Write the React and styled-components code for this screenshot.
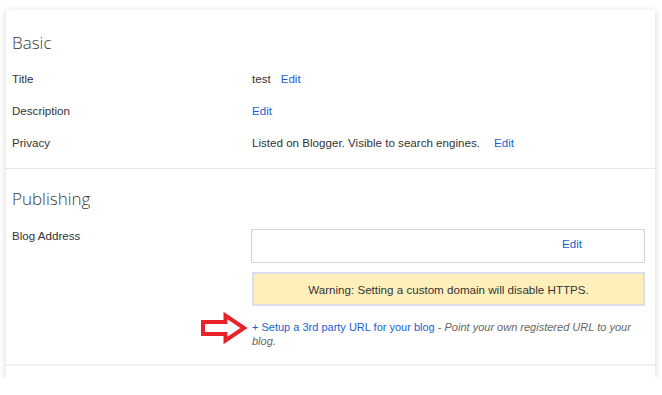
import React from "react";
import styled, { createGlobalStyle } from "styled-components";

const GlobalStyle = createGlobalStyle`
    html, body {
        margin: 0;
        padding: 0;
        background: #ffffff;
        font-family: Arial, "Liberation Sans", sans-serif;
        font-size: 11.6px;
        color: #222222;
    }
`;

const colors = {
    text: "#333333",
    heading: "#3a3a3a",
    link: "#1a5fd0",
    divider: "#e5e5e5",
    hint: "#666666",
    warnBg: "#fff0bb",
    warnBorder: "#d9dfea",
    boxBorder: "#d5d5d5",
    arrow: "#e8232a",
};

const ArrowMark = () => (
    <svg width="48" height="32" viewBox="0 0 48 32">
        <path
            d="M3 10 H25.5 V3.5 L44 16 L25.5 28.5 V22 H3 Z"
            fill="none"
            stroke={colors.arrow}
            strokeWidth="4"
            strokeLinejoin="miter"
        />
    </svg>
);

const Row = ({ label, children }) => (
    <RowWrapper>
        <Label>{label}</Label>
        <Value>{children}</Value>
    </RowWrapper>
);

const App = () => {
    return (
        <>
            <GlobalStyle />
            <Page>
                <Card>
                    <Section top={21} bottom={9}>
                        <Heading>Basic</Heading>
                        <Row label="Title">
                            <span>test</span>
                            <EditLink href="#">Edit</EditLink>
                        </Row>
                        <Row label="Description">
                            <EditLink href="#" flush>
                                Edit
                            </EditLink>
                        </Row>
                        <Row label="Privacy">
                            <span>Listed on Blogger. Visible to search engines.</span>
                            <EditLink href="#" wide>
                                Edit
                            </EditLink>
                        </Row>
                    </Section>
                    <Section top={18} bottom={16} thick>
                        <Heading>Publishing</Heading>
                        <AddressRow>
                            <Label>Blog Address</Label>
                            <AddressColumn>
                                <AddressBox>
                                    <EditLink href="#" flush>
                                        Edit
                                    </EditLink>
                                </AddressBox>
                                <Warning>Warning: Setting a custom domain will disable HTTPS.</Warning>
                                <SetupNote>
                                    <ArrowHolder>
                                        <ArrowMark />
                                    </ArrowHolder>
                                    <SetupLink href="#">+ Setup a 3rd party URL for your blog</SetupLink>
                                    {" - "}
                                    <Hint>Point your own registered URL to your blog.</Hint>
                                </SetupNote>
                            </AddressColumn>
                        </AddressRow>
                    </Section>
                    <Tail />
                </Card>
            </Page>
        </>
    );
};

export default App;

/** styled components **/
const Page = styled.div`
    padding: 10px 7px 0 6px;
`;

const Card = styled.div`
    background: #ffffff;
    box-shadow: 0 1px 7px rgba(0, 0, 0, 0.16);
    padding: 0 6px;
`;

const Section = styled.section`
    padding-top: ${(p) => p.top}px;
    padding-bottom: ${(p) => p.bottom}px;
    margin: 0 -6px;
    padding-left: 6px;
    padding-right: 6px;
    border-bottom: ${(p) => (p.thick ? "2px solid #f1f1f1" : `1px solid ${colors.divider}`)};
`;

const Heading = styled.h2`
    margin: 0 0 8px;
    font-family: "Open Sans", "Liberation Sans", sans-serif;
    font-weight: 300;
    font-size: 17px;
    line-height: 24px;
    color: ${colors.heading};
`;

const RowWrapper = styled.div`
    display: grid;
    grid-template-columns: 240px 1fr;
    padding: 9px 0;
    line-height: 14px;
`;

const Label = styled.div`
    color: ${colors.text};
    line-height: 14px;
`;

const Value = styled.div`
    display: flex;
    align-items: center;
    color: ${colors.text};
`;

const EditLink = styled.a`
    color: ${colors.link};
    text-decoration: none;
    margin-left: ${(p) => (p.flush ? 0 : p.wide ? 14 : 10)}px;
`;

const AddressRow = styled.div`
    display: grid;
    grid-template-columns: 239px 394px;
    padding-top: 10px;
`;

const AddressColumn = styled.div`
    display: flex;
    flex-direction: column;
`;

const AddressBox = styled.div`
    box-sizing: border-box;
    height: 34px;
    border: 1px solid ${colors.boxBorder};
    display: flex;
    align-items: center;
    justify-content: flex-end;
    padding-right: 62px;
    padding-bottom: 5px;
`;

const Warning = styled.div`
    margin-top: 9px;
    margin-left: 1px;
    height: 30px;
    background: ${colors.warnBg};
    border: 2px solid ${colors.warnBorder};
    display: flex;
    align-items: center;
    justify-content: center;
    color: ${colors.text};
`;

const SetupNote = styled.p`
    position: relative;
    margin: 14px 0 0 1px;
    font-size: 11px;
    line-height: 14px;
    color: ${colors.hint};
`;

const ArrowHolder = styled.span`
    position: absolute;
    left: -52px;
    top: -8px;
    line-height: 0;
`;

const SetupLink = styled.a`
    color: ${colors.link};
    text-decoration: none;
`;

const Hint = styled.em`
    color: ${colors.hint};
`;

const Tail = styled.div`
    height: 12px;
`;
